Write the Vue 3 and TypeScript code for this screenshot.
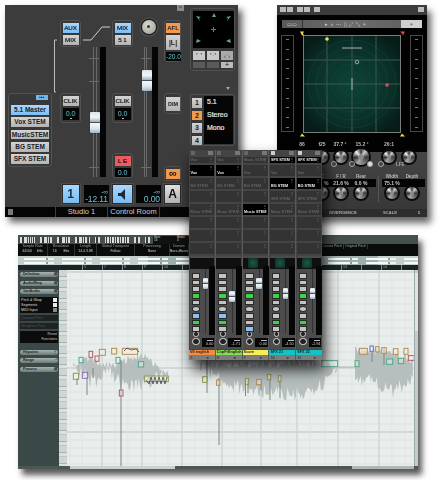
<script setup lang="ts">
interface Strip { name: string; color: string; num: string; slots: string[]; active: number[]; fader: number; value: string; radar: boolean; green: number[]; blue: number; hot: boolean }
interface Note { x: number; y: number; w: number; h: number; c: string }

const sources: string[] = ['5.1 Master', 'Vox STEM', 'MusicSTEM', 'BG STEM', 'SFX STEM']
const presets: string[] = ['1', '2', '3', '4']

const strips: Strip[] = [
  { name: 'VII english', color: '#f68a3e', num: '7', slots: ['Vox', 'Vox', 'BG STEM', '', 'Music STEM', '', '', ''], active: [1], fader: 9, value: '0.00', radar: false, green: [3, 7], blue: 6, hot: false },
  { name: 'CopFrEnglish', color: '#86dc52', num: '8', slots: ['Vox', 'Vox', 'BG STEM', '', 'Music STEM', '', '', ''], active: [1], fader: 22, value: '-1.71', radar: false, green: [3, 7], blue: 6, hot: false },
  { name: 'Score', color: '#f6ee58', num: '9', slots: ['Music STEM', 'Vox', 'BG STEM', '', 'Music STEM', '', '', ''], active: [4], fader: 9, value: '0.00', radar: true, green: [3], blue: 8, hot: false },
  { name: 'SFX 21', color: '#12c3c6', num: '10', slots: ['SFX STEM', 'Vox', 'BG STEM', 'SFX STEM', 'Music STEM', '', '', ''], active: [0, 2], fader: 19, value: '-4.50', radar: true, green: [3, 7], blue: -1, hot: true },
  { name: 'SFX 22', color: '#12c3c6', num: '11', slots: ['SFX STEM', 'Vox', 'BG STEM', 'SFX STEM', 'Music STEM', '', '', ''], active: [0, 2], fader: 19, value: '-1.94', radar: true, green: [3, 7], blue: -1, hot: true },
]
const stripButtons: number[] = [0, 1, 2, 3, 4, 5, 6, 7, 8]

const gridX: number[] = [327, 352, 376]
const gridY: number[] = [62, 86, 110]
const rings: number[] = [12, 20, 28, 36, 44]
const scaleMarks: number[] = [0, 1, 2, 3, 4, 5, 6, 7, 8, 9]

const toolbar: number[] = [7, 3, 3, 0, 7, 4, 0, 8, 4, 0, 7, 4, 2, 0, 5, 0, 4, 4, 4, 4, 4, 0, 6, 0, 5]
const infoCols: { t: string; v: string; w: number }[] = [
  { t: 'Sample Rate', v: '44100     kHz', w: 30 }, { t: 'Resolution', v: '16       Bits', w: 27 },
  { t: 'Length', v: '14.4.3.88', w: 22 }, { t: 'Global Transpose', v: 'Follow', w: 38 },
  { t: 'Processing', v: 'None', w: 35 }, { t: 'Domain', v: 'Bars+Beats', w: 19 },
]
const inspectTop: { t: string; k: string }[] = [
  { t: 'Definition', k: '⊠' }, { t: 'AudioWarp', k: '⊠' }, { t: 'VariAudio', k: '⊠' },
]
const inspectBottom: { t: string; k: string }[] = [
  { t: 'Hitpoints', k: '⋮' }, { t: 'Range', k: '−' }, { t: 'Process', k: '⊠' },
]
const variRows: { t: string; on: boolean }[] = [
  { t: 'Pitch & Warp', on: true }, { t: 'Segments', on: true }, { t: 'MIDI Input', on: false },
]

const noise = (i: number, seed: number): number => Math.abs(Math.sin(i * 12.9898 + seed) * 43758.5453) % 1

function blob(env: number[][], seed: number): string {
  const top: string[] = []
  const bottom: string[] = []
  for (let k = 0; k < env.length - 1; k++) {
    const [x0, t0, b0] = env[k]
    const [x1, t1, b1] = env[k + 1]
    const n = Math.max(1, Math.round((x1 - x0) / 1.2))
    for (let j = 0; j < n; j++) {
      const f = j / n
      const x = x0 + (x1 - x0) * f
      const t = t0 + (t1 - t0) * f + noise(k * 40 + j, seed) * 8
      const b = b0 + (b1 - b0) * f - noise(k * 40 + j, seed + 3) * 15
      top.push(`${x.toFixed(1)},${t.toFixed(1)}`)
      bottom.unshift(`${x.toFixed(1)},${b.toFixed(1)}`)
    }
  }
  return [...top, ...bottom].join(' ')
}

const blobs: string[] = [
  blob([[73, 362, 370], [82, 357, 380], [90, 355, 388], [100, 361, 388], [107, 360, 374], [113, 362, 384], [123, 357, 392], [140, 352, 392], [150, 355, 388], [160, 365, 384], [169, 376, 380]], 1),
  blob([[200, 360, 372], [215, 360, 384], [230, 360, 394], [250, 360, 396], [280, 360, 400], [297, 360, 402], [315, 358, 396], [330, 360, 386], [338, 366, 372]], 2),
  blob([[355, 345, 392], [364, 347, 390], [373, 348, 388], [383, 348, 396], [393, 352, 398], [403, 352, 392], [414, 357, 388]], 3),
]

const z5 = (a: number, b: number, c: number, d: number, col: string): Note => ({ x: 10 + a / 3, y: 340 + b / 3, w: c / 3, h: d / 3, c: col })
const z6 = (a: number, b: number, c: number, d: number, col: string): Note => ({ x: 230 + a / 3, y: 230 + b / 3, w: c / 3, h: d / 3, c: col })
const olive = '#8e9a48'; const orange = '#b98a4a'; const teal = '#4fa88c'; const red = '#b05a66'; const purple = '#8a70b8'; const blue = '#5a70c0'
const notes: Note[] = [
  z5(190, 100, 16, 18, olive), z5(217, 97, 16, 18, purple), z5(207, 52, 12, 16, teal), z5(237, 34, 11, 18, red), z5(255, 48, 12, 16, red),
  z5(268, 28, 18, 18, orange), z5(305, 25, 15, 17, orange), z5(318, 52, 12, 18, teal), z5(337, 25, 46, 18, orange), z5(328, 150, 11, 18, red),
  z5(385, 65, 16, 16, teal), z5(403, 108, 72, 17, olive), z5(578, 110, 13, 17, olive), z5(620, 120, 10, 16, orange),
  z6(46, 445, 10, 18, olive), z6(80, 448, 14, 16, orange), z6(112, 433, 10, 16, olive), z6(145, 437, 8, 18, olive),
  z6(375, 392, 12, 18, teal), z6(388, 355, 24, 18, orange), z6(420, 348, 10, 16, blue), z6(437, 350, 10, 16, orange),
  z6(455, 353, 14, 18, orange), z6(470, 387, 18, 16, teal), z6(490, 356, 14, 18, orange), z6(505, 385, 16, 16, teal),
  z6(522, 355, 12, 18, orange), z6(535, 377, 18, 14, red), z6(275, 392, 48, 18, teal),
]
const stems: number[][] = [
  [121, 360, 466], [87, 377, 395], [77, 378, 385], [93, 368, 378], [207, 360, 393], [219, 378, 445],
  [245.5, 378, 396], [248, 380, 393], [261, 381, 390], [270, 378, 400], [280, 380, 398], [384, 348, 365], [372, 352, 362],
]
const editV: number[] = [70, 82, 102, 115, 128, 142, 155, 168, 182, 195, 208, 222, 235, 248, 261, 275, 288, 297, 310, 325, 338, 352, 365, 379, 392, 405]
const editMajor: number[] = [102, 142, 182, 222, 261, 297, 338, 379]
const editH: number[] = Array.from({ length: 25 }, (_, i) => 272 + i * 8)
const editHMajor: number[] = [272, 368, 432]
const rulerTicks: { x: number; t: string }[] = [
  { x: 82, t: '1' }, { x: 102, t: '7' }, { x: 122, t: '8' }, { x: 142, t: '9' }, { x: 162, t: '10' }, { x: 182, t: '' },
  { x: 341, t: '13' }, { x: 361, t: '' }, { x: 381, t: '14' }, { x: 401, t: '' },
]
</script>

<template>
  <div class="desk">
    <!-- Cubase VariAudio editor -->
    <section class="win editor">
      <div class="tb">
        <i v-for="(w, i) in toolbar" :key="i" class="tb-i" :class="{ gap: w === 0 }" :style="{ width: (w || 3) + 'px' }"></i>
        <div class="tb-info"><span>Bars<br />16</span><span>Beats<br />4</span><span>Length<br />3.0.0.0</span></div>
      </div>
      <div class="info">
        <div v-for="c in infoCols" :key="c.t" class="info-c" :style="{ width: c.w + 'px' }"><b>{{ c.t }}</b><span>{{ c.v }}</span></div>
        <div class="info-c right"><b>Current Pitch</b><span></span></div>
        <div class="info-c rightb"><b>Original Pitch</b><span></span></div>
      </div>
      <div class="over">
        <span class="over-shade"></span><span class="over-line a"></span><span class="over-line b"></span>
      </div>
      <div class="ruler">
        <span v-for="r in rulerTicks" :key="r.x" class="rt" :style="{ left: r.x - 59 + 'px' }">{{ r.t }}</span>
      </div>
      <div class="body">
        <aside class="insp">
          <div v-for="r in inspectTop" :key="r.t" class="pill"><span>{{ r.t }}</span><em>{{ r.k }}</em></div>
          <div class="vari">
            <div v-for="r in variRows" :key="r.t" class="vari-r"><span>{{ r.t }}</span><i :class="{ on: r.on }"></i></div>
          </div>
          <div class="dim-box">Quantize Pitch</div>
          <div class="dim-box">Straighten Pitch</div>
          <div class="reset"><span>Reset</span><span>Functions</span></div>
          <div class="pills-b">
            <div v-for="r in inspectBottom" :key="r.t" class="pill"><span>{{ r.t }}</span><em>{{ r.k }}</em></div>
          </div>
        </aside>
        <div class="keys"></div>
        <svg class="canvas" viewBox="67 270 347 196" width="347" height="196">
          <rect x="67" y="270" width="347" height="196" fill="#e9eeec" />
          <line v-for="y in editH" :key="'h' + y" x1="67" x2="414" :y1="y" :y2="y" stroke="#dbe2e0" stroke-width="1" />
          <line v-for="y in editHMajor" :key="'hm' + y" x1="67" x2="414" :y1="y" :y2="y" stroke="#bfc8c6" stroke-width="1" />
          <line v-for="x in editV" :key="'v' + x" :x1="x" :x2="x" y1="270" y2="466" stroke="#dfe5e3" stroke-width="1" />
          <line v-for="x in editMajor" :key="'vm' + x" :x1="x" :x2="x" y1="270" y2="466" stroke="#c6cfcd" stroke-width="1" />
          <polygon v-for="(b, i) in blobs" :key="'b' + i" :points="b" fill="#b7bebe" />
          <line x1="338" x2="355" y1="367" y2="367" stroke="#9aa5a3" stroke-width=".7" />
          <line v-for="(s, i) in stems" :key="'s' + i" :x1="s[0]" :x2="s[0]" :y1="s[1]" :y2="s[2]" stroke="#7d8584" stroke-width="1" />
          <rect v-for="(n, i) in notes" :key="'n' + i" :x="n.x" :y="n.y" :width="n.w" :height="n.h" fill="#f2f4ee" fill-opacity=".45" :stroke="n.c" stroke-width="1" />
          <polyline points="124,351 127,348 131,350 136,349 139,352" fill="none" stroke="#444" stroke-width=".8" />
          <polyline points="146,380 149,384 151,377 153,384 155,377 157,384 159,377 161,384 163,377 165,384 167,377" fill="none" stroke="#444" stroke-width=".8" />
        </svg>
        <div class="vscroll"><i></i></div>
      </div>
      <div class="hscroll"><i></i><b></b></div>
    </section>

    <!-- Control room -->
    <section class="win room">
      <button class="up" type="button">^</button>
      <svg class="wires" width="233" height="100" viewBox="5 5 233 100">
        <path d="M56 92H54.500V40H57" fill="none" stroke="#bdbdbd" stroke-width="1" />
        <path d="M83 40H91L102 27H110" fill="none" stroke="#cfcfcf" stroke-width="1" />
      </svg>
      <div class="room-main">
        <div class="col-a">
          <div class="panel src">
            <span class="src-badge">▪▪▪</span>
            <button v-for="(s, i) in sources" :key="s" type="button" class="btn src-btn" :class="{ blue: i === 0 }">{{ s }}</button>
          </div>
        </div>
        <div class="col-b">
          <div class="panel duo">
            <button class="btn sq blue" type="button">AUX</button>
            <button class="btn sq" type="button">MIX</button>
          </div>
          <div class="panel clik">
            <button class="btn sq" type="button">CLIK</button>
            <div class="read small">0.0<i></i></div>
          </div>
          <button class="big blue" type="button">1</button>
        </div>
        <div class="zone">
          <div class="fader f1">
            <i class="tick" style="top: 11px"></i><i class="tick" style="top: 34px"></i><i class="tick" style="top: 120px"></i>
            <i class="rail"></i><i class="meter"></i>
            <span class="cap" style="top: 65px"></span>
          </div>
          <div class="level"><span>-∞</span><b>-12.11</b></div>
        </div>
        <div class="col-b">
          <div class="panel duo">
            <button class="btn sq blue" type="button">MIX</button>
            <button class="btn sq" type="button">5 1</button>
          </div>
          <div class="panel clik">
            <button class="btn sq" type="button">CLIK</button>
            <div class="read small">0.0<i></i></div>
          </div>
          <div class="panel le">
            <button class="btn sq red" type="button">L E</button>
            <div class="read tiny">0.0</div>
          </div>
          <button class="big blue spk" type="button">
            <svg width="9" height="11" viewBox="0 0 9 11"><path d="M0 4h3l4-4v11L3 7H0z" fill="#1a2a3a" /></svg>
          </button>
        </div>
        <div class="zone">
          <span class="dial"><i></i></span>
          <div class="fader f2">
            <i class="tick" style="top: 11px"></i><i class="tick" style="top: 120px"></i>
            <i class="rail"></i><i class="meter"></i>
            <span class="cap" style="top: 23px"></span>
          </div>
          <div class="level"><span>-∞</span><b>0.00</b></div>
        </div>
        <div class="col-d">
          <div class="panel afl">
            <button class="btn orange d1" type="button">AFL</button>
            <button class="btn d2" type="button">|L|</button>
            <div class="read d3">-20.0</div>
          </div>
          <div class="panel dim"><button class="btn d4" type="button">DIM</button></div>
          <div class="panel link"><button class="btn orange d5" type="button">∞</button></div>
          <button class="big" type="button">A</button>
        </div>
        <div class="col-e">
          <div class="panel spk-panel">
            <svg class="spk-map" width="41" height="37" viewBox="0 0 41 37">
              <rect width="41" height="37" fill="#000" />
              <g fill="#5fa3a8">
                <path d="M3 5l5 1-2 1 1 3zM21 2l2 4h-4zM38 5l-5 1 2 1-1 3zM3 32l1-4 2 1 2 1zM38 32l-1-4-2 1-2 1z" />
              </g>
              <path d="M20.500 16v5M18 18.500h5" stroke="#3d8d94" stroke-width="1" />
            </svg>
            <div class="spk-row"><i class="sb">⌜ ⌝</i><i class="sb">⌜·⌝</i><i class="sb dark">⌞·⌟</i></div>
            <div class="spk-row low"><i class="sb dk"></i><i class="sb dk"></i><i class="sb lt">+</i></div>
          </div>
          <span class="tri"></span>
          <div class="panel pre">
            <div class="pre-btns">
              <button v-for="p in presets" :key="p" class="btn pb" :class="{ orange: p === '2' }" type="button">{{ p }}</button>
            </div>
            <div class="pre-list"><span>5.1</span><span>Stereo</span><span>Mono</span></div>
          </div>
        </div>
      </div>
      <div class="status">
        <div class="st st0"><i></i></div>
        <div class="st st1">Studio 1</div>
        <div class="st st1">Control Room</div>
        <div class="st st2"></div>
      </div>
    </section>

    <!-- Surround panner -->
    <section class="win pan">
      <div class="pan-title">
        <i class="tbtn"></i><i class="tbtn g"></i><i class="tbtn"></i><i class="tbtn g"></i><i class="tbtn"></i><i class="tbtn last"></i>
      </div>
      <div class="stage">
        <div class="pan-tools">
          <span class="pt-a">▭▭</span>
          <span class="pt-b">▸ ▹ ⋯ ▯ ⤢ ⤡ ⌖</span>
          <span class="pt-c">⌖</span>
        </div>
        <div class="pan-view">
          <div class="vu"><i v-for="m in scaleMarks" :key="m"></i></div>
          <svg class="radar" width="106" height="106" viewBox="299 33 106 106">
            <defs>
              <radialGradient id="rg" cx="50%" cy="50%" r="60%">
                <stop offset="0" stop-color="#0d4438" /><stop offset=".7" stop-color="#0a2f28" /><stop offset="1" stop-color="#071c18" />
              </radialGradient>
            </defs>
            <rect x="303.500" y="37.500" width="97" height="97" fill="url(#rg)" stroke="#767d7a" stroke-width="1" />
            <circle v-for="r in rings" :key="r" cx="352" cy="86" :r="r" fill="none" stroke="#124a3e" stroke-width=".5" />
            <line v-for="x in gridX" :key="'x' + x" :x1="x" :x2="x" y1="38" y2="134" stroke="#3d5851" stroke-width="1" />
            <line v-for="y in gridY" :key="'y' + y" x1="304" x2="400" :y1="y" :y2="y" stroke="#3d5851" stroke-width="1" />
            <path d="M342 50h20" stroke="#9a9c94" stroke-width="1.200" />
            <path d="M352 80v12" stroke="#8b9692" stroke-width="1.400" />
            <circle cx="357" cy="64" r="1.800" fill="none" stroke="#9aa" stroke-width="1" />
            <circle cx="327" cy="41" r="1.800" fill="#e7e75a" />
            <circle cx="387" cy="87" r="1.800" fill="#e14a54" />
            <path d="M300 33.500h4l-1 2 1 2h-2l-1-2zM302 135.500l3 3h-5z" fill="#e8d860" />
            <path d="M405 33.500h-5l2 2 1 2 1-2z" fill="#d84a50" />
            <path d="M402 135.500l3 3h-5z" fill="#e8d860" />
          </svg>
          <div class="vu"><i v-for="m in scaleMarks" :key="m"></i></div>
        </div>
        <div class="vals"><span>86</span><span>f25</span><span>37.7 °</span><span>15.2 °</span><span>26:1</span><span></span></div>
      </div>
      <div class="pan-lower">
        <div class="knobs">
          <i class="kn"></i><i class="kn"></i><i class="kn lg"></i><i class="kn"></i><i class="kn"></i>
        </div>
        <div class="rings">
          <i class="rg"></i><i class="rg"></i><i class="rg dot"></i><i class="rg"></i><span>LFE</span>
        </div>
        <div class="sections">
          <div class="sec s1">
            <div class="sec-h"><span>C</span><span>F / R</span><span>Rear</span></div>
            <div class="sec-v"><span>0.1 %</span><span>21.6 %</span><span>0.0 %</span></div>
            <div class="sec-k"><i class="kn"></i><i class="kn"></i><i class="kn"></i></div>
          </div>
          <div class="sec s2">
            <div class="sec-h"><span>Width</span><span>Depth</span></div>
            <div class="sec-v"><span>75.1 %</span><span></span></div>
            <div class="sec-k"><i class="kn"></i><i class="kn"></i></div>
          </div>
        </div>
        <div class="pan-foot"><span>DIVERGENCE</span><span>SCALE</span><span>5</span></div>
      </div>
    </section>

    <!-- Mixer -->
    <section class="win mixer">
      <div v-for="s in strips" :key="s.name" class="strip">
        <div class="strip-h"><i :class="{ lit: s.hot }"></i><i class="r"></i></div>
        <div v-for="(slot, i) in s.slots" :key="i" class="slot" :class="{ first: i === 0, act: s.active.includes(i) }">
          <span>{{ slot }}</span><em>⋮</em>
        </div>
        <div class="chan">
          <div class="chan-top"><span v-if="s.radar" class="chan-radar"></span></div>
          <div class="chan-body">
            <div class="chan-btns">
              <i v-for="b in stripButtons" :key="b" class="cb" :class="{ gr: s.green.includes(b) || b === 3, bl: s.blue === b, ro: b === 5 }"></i>
            </div>
            <div class="chan-fader">
              <i class="cf-rail"></i>
              <i class="cf-meter"></i>
              <span class="cap mini" :style="{ top: s.fader + 'px' }"></span>
            </div>
          </div>
          <div class="chan-foot">
            <div class="ch-knobs"><i class="ck"></i><i class="ck big2"></i></div>
            <div class="ch-read"><i></i><span>{{ s.value }}</span></div>
          </div>
        </div>
        <div class="tag" :style="{ background: s.color }">{{ s.name }}</div>
        <div class="num"><span>{{ s.num }}</span><i>▸</i></div>
      </div>
    </section>
  </div>
</template>

<style scoped>
.desk { position: relative; width: 440px; height: 480px; overflow: hidden; background: #fff; font-family: "Liberation Sans", Arial, sans-serif; }
.win { position: absolute; box-sizing: border-box; filter: blur(.3px); }
button { padding: 0; margin: 0; border: 0; font-family: inherit; }
i, em { font-style: normal; display: block; }

/* room */
.room { left: 5px; top: 5px; width: 233px; height: 212px; background: #3c3c3c; display: flex; flex-direction: column; box-shadow: 4px 5px 7px rgba(0,0,0,.65); }
.up { position: absolute; left: 172px; top: 0; width: 7px; height: 6px; background: #8b8b8b; color: #222; font-size: 6px; line-height: 7px; }
.wires { position: absolute; left: 0; top: 0; }
.room-main { flex: 1; display: flex; padding-left: 3px; min-height: 0; }
.col-a { width: 44px; margin-right: 8px; padding-top: 88px; box-sizing: border-box; }
.panel { background: #383838; border: 1px solid #525252; border-radius: 3px; box-sizing: border-box; }
.src { height: 74px; display: flex; flex-direction: column; align-items: center; padding-top: 11px; gap: 2.500px; position: relative; }
.src-badge { position: absolute; right: 3px; top: 1px; width: 12px; height: 5px; background: #6fb7ee; color: #124; font-size: 5px; line-height: 5px; text-align: center; }
.btn { background: linear-gradient(#d4d4d4, #b4b4b4); color: #1c1c1c; font-weight: 700; display: block; text-align: center; box-sizing: border-box; }
.btn.blue { background: linear-gradient(#a8d8ff, #7cbef5); }
.btn.orange { background: #f59a4d; }
.btn.red { background: #ea5b64; color: #3a0a0a; }
.src-btn { width: 38px; height: 9.800px; font-size: 6.500px; line-height: 10px; white-space: nowrap; overflow: hidden; }
.col-b { width: 21px; display: flex; flex-direction: column; padding-top: 15px; box-sizing: border-box; padding-bottom: 4px; position: relative; }
.duo { height: 27px; padding: 2px 1.500px 0; display: flex; flex-direction: column; gap: 2px; }
.sq { width: 16px; height: 10px; font-size: 6.200px; line-height: 10px; font-weight: 400; -webkit-text-stroke: .2px #111; }
.clik { height: 30px; margin-top: 46px; padding: 2px 1.500px; display: flex; flex-direction: column; gap: 2px; }
.read { background: #050505; color: #6dc3d0; text-align: center; position: relative; font-size: 7px; }
.small { width: 16px; height: 14px; line-height: 11px; }
.small i { position: absolute; left: 7px; bottom: 1px; width: 2px; height: 1px; background: #bbb; }
.le { height: 25px; margin-top: 30px; padding: 2px 1.500px; display: flex; flex-direction: column; gap: 1.500px; }
.tiny { width: 16px; height: 9px; line-height: 9px; }
.big { width: 16px; height: 18px; margin: auto auto 0; background: linear-gradient(#e2e2e2, #b4b4b4); color: #111; font-size: 12px; font-weight: 700; outline: 1px solid #2a2a2a; box-shadow: 0 0 0 2px #4c4c4c; line-height: 18px; display: block; }
.big.blue { background: linear-gradient(#a8d8ff, #79bbf2); color: #14304a; }
.spk { width: 19px; display: flex; align-items: center; justify-content: center; }
.zone { width: 31px; display: flex; flex-direction: column; padding-bottom: 4px; box-sizing: border-box; }
.fader { position: relative; height: 130px; margin-top: 42px; }
.f2 { margin-top: 13px; }
.tick { position: absolute; left: 8px; width: 10px; height: 1px; background: #6a6a6a; }
.rail { position: absolute; left: 12px; top: 0; width: 2px; height: 130px; border-left: 1px solid #6a6a6a; border-right: 1px solid #6a6a6a; }
.f2 .rail { left: 11px; width: 1px; }
.meter { position: absolute; left: 19px; top: 0; width: 6px; height: 130px; background: #050505; }
.cap { position: absolute; left: 9px; width: 9.500px; height: 21px; background: linear-gradient(#dfe3e6 0, #f4f4f4 25%, #9db4c4 46%, #40515c 50%, #f4f6f7 54%, #dfe7ec 78%, #9cb6c8 100%); border-radius: 1px; box-shadow: 0 0 1px #000; }
.level { margin: auto 3px 0; height: 18px; background: #050505; color: #6fc2d2; text-align: right; font-size: 6.500px; line-height: 7px; display: flex; flex-direction: column; padding: 3px 1px 0 0; box-sizing: border-box; }
.level b { font-weight: 400; font-size: 8.500px; line-height: 9px; letter-spacing: -.1px; white-space: nowrap; }
.dial { width: 14px; height: 14px; margin: 15px auto 0; margin-left: 9px; border-radius: 50%; background: radial-gradient(circle at 40% 35%, #d8d8d0, #9a9a92); box-shadow: 0 0 0 1.500px #1e1e1e, 0 0 0 2.500px #555; display: block; position: relative; }
.dial i { position: absolute; left: 5px; top: 5px; width: 3px; height: 3px; background: #333; border-radius: 50%; }
.col-d { width: 17px; display: flex; flex-direction: column; padding: 15px 0 4px; box-sizing: border-box; }
.afl { height: 42px; padding: 2px 0 0 1px; }
.d1 { width: 14px; height: 10px; font-size: 6px; line-height: 10px; }
.d2 { width: 14px; height: 15px; margin-top: 2px; font-size: 7px; line-height: 15px; }
.d3 { width: 15px; height: 9px; margin-top: 2px; line-height: 9px; font-size: 6.500px; white-space: nowrap; }
.dim { height: 21px; margin-top: 31px; padding: 3px 0 0 1px; }
.d4 { width: 14px; height: 14px; font-size: 5.500px; line-height: 14px; }
.link { height: 15px; margin-top: 52px; padding: 1.500px 0 0 1px; }
.d5 { width: 14px; height: 10px; font-size: 11px; line-height: 9px; color: #111; }
.col-d .big { width: 15px; margin-left: 1px; }
.col-e { width: 45px; margin-left: 9px; padding-top: 3px; box-sizing: border-box; display: flex; flex-direction: column; }
.spk-panel { height: 63px; padding: 2px 1px 0 2px; }
.spk-map { display: block; }
.spk-row { display: flex; gap: 2px; margin-top: 3px; }
.spk-row.low { margin-top: 1.500px; }
.sb { width: 12px; height: 9px; background: #c9c9c9; color: #111; font-size: 5px; line-height: 9px; text-align: center; overflow: hidden; }
.sb.dark { background: #a9a9a9; }
.low .sb { height: 6px; line-height: 6px; }
.sb.dk { background: #5a5a5a; }
.sb.lt { background: #bbb; font-size: 7px; }
.tri { width: 0; height: 0; margin: 16px 0 3px 36px; border: 2.500px solid transparent; border-top: 3px solid #a5a5a5; border-bottom: 0; }
.pre { height: 52px; display: flex; padding: 1px 1px 0 1px; gap: 2px; margin-top: 1px; }
.pre-btns { display: flex; flex-direction: column; gap: 3px; padding-top: 2px; }
.pb { width: 10px; height: 9.500px; font-size: 7px; line-height: 10px; }
.pre-list { flex: 1; height: 48px; background: #050505; color: #e6e6e6; font-size: 7px; display: flex; flex-direction: column; padding: 1px 0 0 3px; gap: 3px; line-height: 10px; box-sizing: border-box; font-weight: 400; -webkit-text-stroke: .2px #e6e6e6; }
.status { height: 10px; background: #050505; display: flex; color: #cfcfcf; font-size: 7.500px; line-height: 10px; text-align: center; }
.st { border-right: 1px solid #3d3d3d; box-sizing: border-box; }
.st0 { width: 51px; padding: 2px 0 0 3px; }
.st0 i { width: 5px; height: 6px; background: #7a7a7a; }
.st1 { width: 52px; white-space: nowrap; }
.st2 { flex: 1; border: 0; }

/* panner */
.pan { left: 277px; top: 5px; width: 150px; height: 212px; background: #3c3c3c; display: flex; flex-direction: column; box-shadow: 4px 6px 7px rgba(0,0,0,.6); }
.pan-title { height: 10px; display: flex; gap: 1px; padding: 2px 0 0 3px; box-sizing: border-box; }
.tbtn { width: 6px; height: 5px; background: #bbb; }
.tbtn.g { margin-right: 3px; }
.tbtn.last { margin: 0 3px 0 auto; }
.stage { height: 137px; background: #020202; padding-top: 5px; box-sizing: border-box; display: flex; flex-direction: column; flex: none; }
.pan-tools { height: 8px; margin: 0 5px; background: linear-gradient(90deg, #5a5a5a, #6d6d6d 50%, #626262 85%); display: flex; color: #d0d0d0; font-size: 5px; line-height: 8px; position: relative; flex: none; }
.pt-a { width: 20px; text-align: center; border-right: 1px solid #333; }
.pt-b { margin-left: 22px; letter-spacing: .6px; white-space: nowrap; }
.pt-c { position: absolute; right: 0; top: 0; width: 21px; height: 8px; background: #cfcfcf; color: #444; text-align: center; }
.pan-view { display: flex; margin-top: 3px; padding-left: 4px; align-items: flex-start; flex: none; }
.vu { width: 13px; height: 97px; margin-top: 4px; box-sizing: border-box; border: 1px solid #474747; display: flex; flex-direction: column; justify-content: space-between; padding: 3px 0; flex: none; }
.vu i { height: 1px; width: 3px; background: #777; align-self: center; }
.radar { margin-left: 5px; margin-right: 5px; flex: none; display: block; }
.vals { display: grid; grid-template-columns: 26px 14px 22px 22px 32px 1fr; color: #bdbdbd; font-size: 5px; font-weight: 700; text-align: center; padding-left: 12px; margin-top: 3px; height: 8px; line-height: 8px; white-space: nowrap; }
.pan-lower { flex: 1; display: flex; flex-direction: column; position: relative; background: linear-gradient(#454545, #363636); min-height: 0; }
.kn { display: block; width: 12px; height: 12px; border-radius: 50%; background: radial-gradient(circle, #8a8a8a 0 24%, rgba(0,0,0,0) 26%), conic-gradient(#3a3a3a, #cfcfcf 10%, #3a3a3a 25%, #a9a9a9 58%, #2f2f2f 74%, #f0f0f0 88%, #3a3a3a); box-shadow: 0 0 0 2px #0b0b0b; }
.kn.lg { width: 16px; height: 16px; margin-left: 6px; }
.knobs { display: flex; position: absolute; left: 39px; top: -3px; height: 16px; align-items: center; }
.knobs .kn:nth-child(2) { margin-left: 7px; }
.knobs .kn:nth-child(4) { margin-left: 14px; }
.knobs .kn:nth-child(5) { margin-left: 8px; }
.rings { display: flex; position: absolute; left: 54px; top: 9px; align-items: center; color: #aaa; font-size: 4.500px; font-weight: 700; }
.rg { width: 4px; height: 4px; border-radius: 50%; border: 1px solid #a9a9a9; margin-right: 12px; }
.rg.dot { background: #ddd; margin-right: 5px; }
.rings span { margin-left: 0; }
.sections { display: flex; margin-top: 23px; padding-left: 39px; }
.sec { display: flex; flex-direction: column; flex: none; }
.s1 { width: 60px; padding-right: 2px; border-right: 1px solid #555; height: 27px; box-sizing: content-box; }
.s2 { width: 43px; margin-left: 3px; }
.sec-h, .sec-v, .sec-k { display: grid; justify-items: center; text-align: center; }
.s1 .sec-h, .s1 .sec-v, .s1 .sec-k { grid-template-columns: 12px 26px 14px 8px; }
.s2 .sec-h, .s2 .sec-v, .s2 .sec-k { grid-template-columns: 20px 20px 3px; }
.sec-h { color: #bbb; font-size: 4.500px; font-weight: 700; height: 3px; line-height: 3px; white-space: nowrap; }
.sec-v { background: #050505; color: #ccc; font-size: 5px; height: 8px; line-height: 8px; font-weight: 700; white-space: nowrap; margin-top: 1px; }
.sec-k { margin-top: 0; }
.pan-foot { position: absolute; left: 0; right: 0; bottom: 0; height: 8px; font-size: 4.200px; font-weight: 700; line-height: 8px; color: #aaa; display: grid; grid-template-columns: 52px 42px 1fr; text-align: center; padding-left: 40px; background: #2d2d2d; }

/* mixer */
.mixer { left: 189px; top: 150px; width: 133px; height: 210px; background: #444; display: flex; box-shadow: 3px 9px 14px rgba(0,0,0,.85); }
.strip { flex: 1; min-width: 0; border-right: 1px solid #5a5a5a; display: flex; flex-direction: column; padding: 0 .5px; box-sizing: border-box; }
.strip:last-child { border-right: 0; }
.strip-h { height: 6px; display: flex; justify-content: space-between; padding: 1px 1px 0; box-sizing: border-box; }
.strip-h i { width: 4px; height: 4px; background: #666; }
.strip-h i.lit { background: #ccc; }
.strip-h i.r { width: 5px; background: #777; }
.slot { height: 11px; margin-top: 2px; background: #333; color: #777; font-size: 3.800px; position: relative; display: flex; align-items: flex-end; line-height: 6px; white-space: nowrap; overflow: hidden; padding-left: 1px; flex: none; }
.slot.first { height: 6px; margin-top: 1px; align-items: center; }
.slot.act { background: #000; color: #eee; font-weight: 700; }
.slot em { position: absolute; right: 1px; top: 1px; font-size: 4px; color: #888; line-height: 4px; }
.chan { height: 93px; margin-top: 2px; background: #4c4c4c; display: flex; flex-direction: column; flex: none; }
.chan-top { height: 11px; margin-top: 2px; background: #101010; flex: none; position: relative; }
.chan-radar { position: absolute; left: 5px; top: 0; width: 10px; height: 10px; background: radial-gradient(#1c5a48, #0c2a24); }
.chan-body { flex: 1; display: flex; min-height: 0; position: relative; }
.chan-btns { width: 13px; padding: 4px 0 0 2px; display: flex; flex-direction: column; gap: 1px; box-sizing: border-box; }
.cb { width: 6.500px; height: 4px; background: #c4c4c4; border: .5px solid #2a2a2a; box-sizing: content-box; }
.cb.gr { background: #3bd444; }
.cb.bl { background: #8ac2f4; }
.cb.ro { border-radius: 50%; }
.chan-fader { flex: 1; position: relative; }
.cap.mini { left: 0; width: 5.500px; height: 11px; }
.cf-rail { position: absolute; left: 2.500px; top: 0; height: 64px; width: 1px; background: #303030; }
.cf-meter { position: absolute; left: 6.500px; top: -3px; width: 6px; height: 69px; background: #060606; }
.chan-foot { height: 16px; display: flex; padding: 0 0 1px 2px; flex: none; }
.ch-knobs { width: 9px; flex: none; display: flex; flex-direction: column; align-items: center; margin-top: -1px; gap: 1px; }
.ck { width: 3.500px; height: 3.500px; border-radius: 50%; border: 1px solid #ccc; background: #222; }
.ck.big2 { width: 5.500px; height: 5.500px; border: 1.500px solid #e3e3e3; background: #222; }
.ch-read { flex: 1; margin-left: 1px; margin-top: 6px; background: #060606; color: #cfcfcf; font-size: 3.800px; line-height: 4px; position: relative; text-align: right; overflow: hidden; height: 9px; }
.ch-read i { position: absolute; right: 1px; top: 2px; width: 6px; height: 1px; background: #bbb; }
.ch-read span { position: absolute; right: 1px; bottom: 1px; }
.tag { height: 5px; font-size: 3.800px; line-height: 5.500px; font-weight: 700; color: #222; white-space: nowrap; overflow: hidden; margin: 1px -.5px 0; padding-left: 1px; flex: none; }
.num { height: 5px; display: flex; justify-content: space-between; color: #222; font-size: 4px; line-height: 5px; padding: 0 6px 0 1px; background: #7c7c7c; margin: 0 -.5px; flex: none; }

/* editor */
.editor { left: 18px; top: 235px; width: 400px; height: 234px; background: #3b4848; display: flex; flex-direction: column; box-shadow: 4px 6px 6px rgba(0,0,0,.65); }
.tb { height: 9px; background: #454f4e; display: flex; align-items: center; gap: 1px; padding: 0 2px; flex: none; }
.tb-i { height: 6px; background: linear-gradient(90deg, #dcdcdc 0 25%, #3a3a3a 25% 60%, #dcdcdc 60%); flex: none; }
.tb-i.gap { background: transparent; }
.tb-info { display: flex; gap: 3px; margin-left: 2px; color: #ddd; font-size: 3px; line-height: 3.500px; background: #111; height: 8px; }
.tb-info span { width: 19px; padding-left: 1px; }
.info { height: 12px; background: #0a0c0c; display: flex; color: #9aa3a2; font-size: 3.500px; line-height: 5px; position: relative; flex: none; }
.info-c { display: flex; flex-direction: column; text-align: center; border-right: 1px solid #2d3333; flex: none; white-space: pre; box-sizing: border-box; overflow: hidden; }
.info-c b { font-weight: 400; }
.info-c span { color: #ccc; }
.info-c.right { position: absolute; left: 302px; width: 24px; border-right: 1px solid #3a3a3a; }
.info-c.rightb { position: absolute; left: 326px; width: 24px; }
.over { height: 9px; background: #c4cfcc; position: relative; overflow: hidden; flex: none; }
.over-line { position: absolute; left: 6px; right: 0; height: 1.500px; background: repeating-linear-gradient(90deg, #f7f8f8 0 22px, #8d9a97 22px 24px, #f0f2f2 24px 30px, rgba(0,0,0,0) 30px 38px); }
.over-line.a { top: 2px; }
.over-line.b { top: 6px; }
.over-shade { position: absolute; left: 130px; width: 230px; top: 0; bottom: 0; background: #9fb0ac; }
.ruler { height: 5px; background: #1a2424; position: relative; color: #aab; font-size: 3.500px; line-height: 5px; flex: none; }
.rt { position: absolute; margin-left: 41px; border-left: 1px solid #889; padding-left: 1px; height: 5px; box-sizing: border-box; }
.body { flex: 1; display: flex; min-height: 0; }
.insp { width: 41px; flex: none; background: #3a4847; padding: 2px 1px 0 2px; box-sizing: border-box; display: flex; flex-direction: column; gap: 3.500px; }
.pill { height: 5px; border-radius: 3px; background: linear-gradient(#a8b4b2, #6d7a78); color: #1c2222; font-size: 3.600px; line-height: 5px; display: flex; justify-content: space-between; padding: 0 1px 0 3px; font-weight: 700; flex: none; }
.pill em { font-size: 3.500px; color: #222; }
.vari { background: #0c0c0c; margin-top: -1px; height: 16px; display: flex; flex-direction: column; padding: 1px 0; box-sizing: border-box; flex: none; }
.vari-r { height: 5px; display: flex; justify-content: space-between; color: #ddd; font-size: 3.600px; line-height: 5px; padding: 0 1px 0 1px; }
.vari-r i { width: 4px; height: 4px; background: #888; }
.vari-r i.on { background: #eee; }
.dim-box { height: 6px; background: #1e2222; color: #556; font-size: 3.400px; line-height: 6px; padding-left: 1px; margin-top: -1px; white-space: nowrap; overflow: hidden; margin-bottom: -1px; flex: none; }
.reset { height: 12px; background: #0c0c0c; color: #ccc; font-size: 3.600px; line-height: 5px; display: flex; flex-direction: column; align-items: flex-end; padding-right: 1px; justify-content: center; flex: none; }
.pills-b { display: flex; flex-direction: column; gap: 3.600px; margin-top: 3px; }
.keys { width: 8px; flex: none; background: repeating-linear-gradient(#cdd6d3 0 6px, #a9b4b1 6px 7px, #d9e0de 7px 10px, #bcc6c3 10px 11px); }
.canvas { display: block; flex: none; }
.vscroll { flex: 1; background: #c4cdca; position: relative; border-left: 1px solid #9aa; }
.vscroll i { position: absolute; left: 0; right: 0; top: 3px; height: 58px; background: #dfe4e2; }
.hscroll { height: 3px; background: #4c5655; position: relative; flex: none; }
.hscroll i { position: absolute; left: 52px; width: 105px; top: 0; bottom: 0; background: #c9d2cf; }
.hscroll b { position: absolute; left: 334px; right: 4px; top: 0; bottom: 0; background: #aeb8b5; }
</style>
